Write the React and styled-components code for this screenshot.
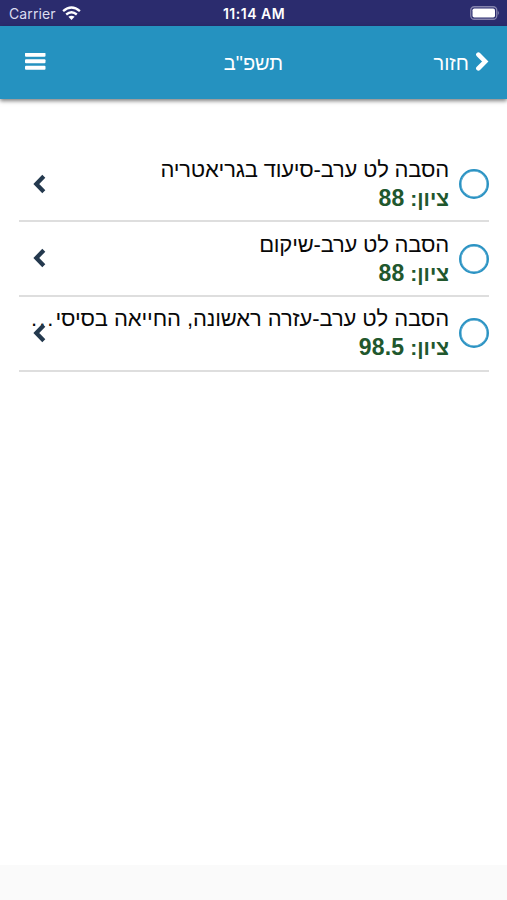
import React from "react";
import styled, { createGlobalStyle } from "styled-components";

const GlobalStyle = createGlobalStyle`
  * { box-sizing: border-box; }
  body { margin: 0; background: #fff; font-family: "Liberation Sans", Arial, sans-serif; }
`;

const Screen = styled.div`
  width: 100%;
  height: 900px;
  display: flex;
  flex-direction: column;
  overflow: hidden;
`;

const StatusBar = styled.div`
  height: 25.5px;
  flex: none;
  display: grid;
  grid-template-columns: 1fr auto 1fr;
  align-items: center;
  padding: 2px 7px 0 9px;
  background: #2b2c6e;
  color: #fff;
  font-family: Inter, sans-serif;
`;

const Carrier = styled.div`
  display: flex;
  align-items: center;
  gap: 6px;
  font-size: 14px;
  letter-spacing: 0.1px;
  color: #dcdcf0;
`;

const Clock = styled.div`
  font-size: 14px;
  font-weight: 600;
  letter-spacing: 0.5px;
  margin-right: 1px;
`;

const BatterySlot = styled.div`
  display: flex;
  justify-content: flex-end;
  height: 16px;
`;

const Header = styled.header`
  height: 73px;
  flex: none;
  display: grid;
  grid-template-columns: 1fr auto 1fr;
  align-items: center;
  padding: 0 18px 0 25px;
  background: #2592c0;
  color: #fff;
  box-shadow: 0 2px 4px rgba(0, 0, 0, 0.5);
`;

const IconButton = styled.button`
  display: flex;
  padding: 0;
  border: 0;
  background: none;
  color: inherit;
  width: 21px;
`;

const Title = styled.h1`
  margin: 2px 7px 0 0;
  font-size: 20px;
  line-height: 26px;
  font-weight: 400;
`;

const Back = styled.button`
  justify-self: end;
  display: flex;
  align-items: center;
  gap: 6px;
  padding: 0;
  border: 0;
  background: none;
  color: inherit;
  font-family: "Liberation Sans", Arial, sans-serif;
  font-size: 20px;
  line-height: 26px;
`;

const BackLabel = styled.span`
  padding-top: 2px;
`;

const Main = styled.main`
  flex: 1;
  padding: 49px 18px 0 19px;
`;

const Row = styled.div`
  direction: rtl;
  height: 74.7px;
  display: grid;
  grid-template-columns: 30px 1fr;
  column-gap: 10px;
  align-items: center;
  border-bottom: 2px solid #dedede;
  position: relative;
`;

const Ring = styled.span`
  width: 30px;
  height: 30px;
  border: 2.5px solid #2b93c3;
  border-radius: 50%;
  box-shadow: inset 0 0 0 0.5px #2b93c3;
`;

const Course = styled.div`
  min-width: 0;
  white-space: nowrap;
`;

const Name = styled.div`
  font-size: 22px;
  line-height: 29px;
  color: #080808;
  letter-spacing: ${(p) => p.$spacing}px;
`;

const Dots = styled.span`
  letter-spacing: 2px;
`;

const Grade = styled.div`
  font-size: 21px;
  line-height: 29px;
  font-weight: 700;
  color: #21572d;
`;

const Score = styled.span`
  font-size: 23px;
  letter-spacing: 0.2px;
`;

const RowArrow = styled.span`
  position: absolute;
  left: 14px;
  top: 26px;
  display: flex;
`;

const Footer = styled.footer`
  height: 35px;
  flex: none;
  background: #fafafa;
`;

const Wifi = () => (
  <svg width="19" height="15" viewBox="0 0 19 15" fill="none" stroke="#fff" strokeWidth="2.4">
    <path d="M1.1 5.1Q9.5-2 17.9 5.1M4.2 8.5Q9.5 4.1 14.8 8.5" />
    <path d="M9.5 14L6.4 10.8Q9.5 8.7 12.6 10.8Z" fill="#fff" stroke="none" />
  </svg>
);

const Battery = () => (
  <svg width="31" height="14" viewBox="0 0 31 14">
    <rect x="1.75" y=".75" width="26" height="12.5" rx="3.5" fill="none" stroke="#8584ad" strokeWidth="1.3" />
    <rect x="3.5" y="2.5" width="22.5" height="9" rx="1.8" fill="#fff" />
    <path d="M28.8 4.8Q31 7 28.8 9.2Z" fill="#8584ad" />
  </svg>
);

const Menu = () => (
  <svg width="21" height="18" viewBox="0 0 21 18" fill="#fff">
    <rect y="-.2" width="20.5" height="4" rx="1" />
    <rect y="6.3" width="20.5" height="4" rx="1" />
    <rect y="12.8" width="20.5" height="4" rx="1" />
  </svg>
);

const BackArrow = () => (
  <svg width="14" height="20" viewBox="0 0 14 20" fill="none" stroke="#fff" strokeWidth="4.6">
    <path d="M3.4 2.6L10.2 9.5L3.4 16.4" strokeLinecap="round" strokeLinejoin="miter" />
  </svg>
);

const Chevron = () => (
  <svg width="13" height="20" viewBox="0 0 13 20" fill="none" stroke="#24394e" strokeWidth="4.2">
    <path d="M10.8 2.2L3.3 10L10.8 17.8" />
  </svg>
);

const courses = [
  { name: "הסבה לט ערב-סיעוד בגריאטריה", grade: "88", spacing: -0.2 },
  { name: "הסבה לט ערב-שיקום", grade: "88", spacing: -0.2 },
  { name: "הסבה לט ערב-עזרה ראשונה, החייאה בסיסי", grade: "98.5", spacing: -0.1, clipped: true },
];

export default function App() {
  return (
    <Screen>
      <GlobalStyle />
      <StatusBar>
        <Carrier>Carrier <Wifi /></Carrier>
        <Clock>11:14 AM</Clock>
        <BatterySlot><Battery /></BatterySlot>
      </StatusBar>
      <Header>
        <IconButton aria-label="תפריט"><Menu /></IconButton>
        <Title dir="rtl">תשפ"ב</Title>
        <Back><BackLabel>חזור</BackLabel><BackArrow /></Back>
      </Header>
      <Main>
        {courses.map((c) => (
          <Row key={c.name}>
            <Ring />
            <Course>
              <Name $spacing={c.spacing}>{c.name}{c.clipped && <Dots>...</Dots>}</Name>
              <Grade>ציון: <Score>{c.grade}</Score></Grade>
            </Course>
            <RowArrow><Chevron /></RowArrow>
          </Row>
        ))}
      </Main>
      <Footer />
    </Screen>
  );
}
